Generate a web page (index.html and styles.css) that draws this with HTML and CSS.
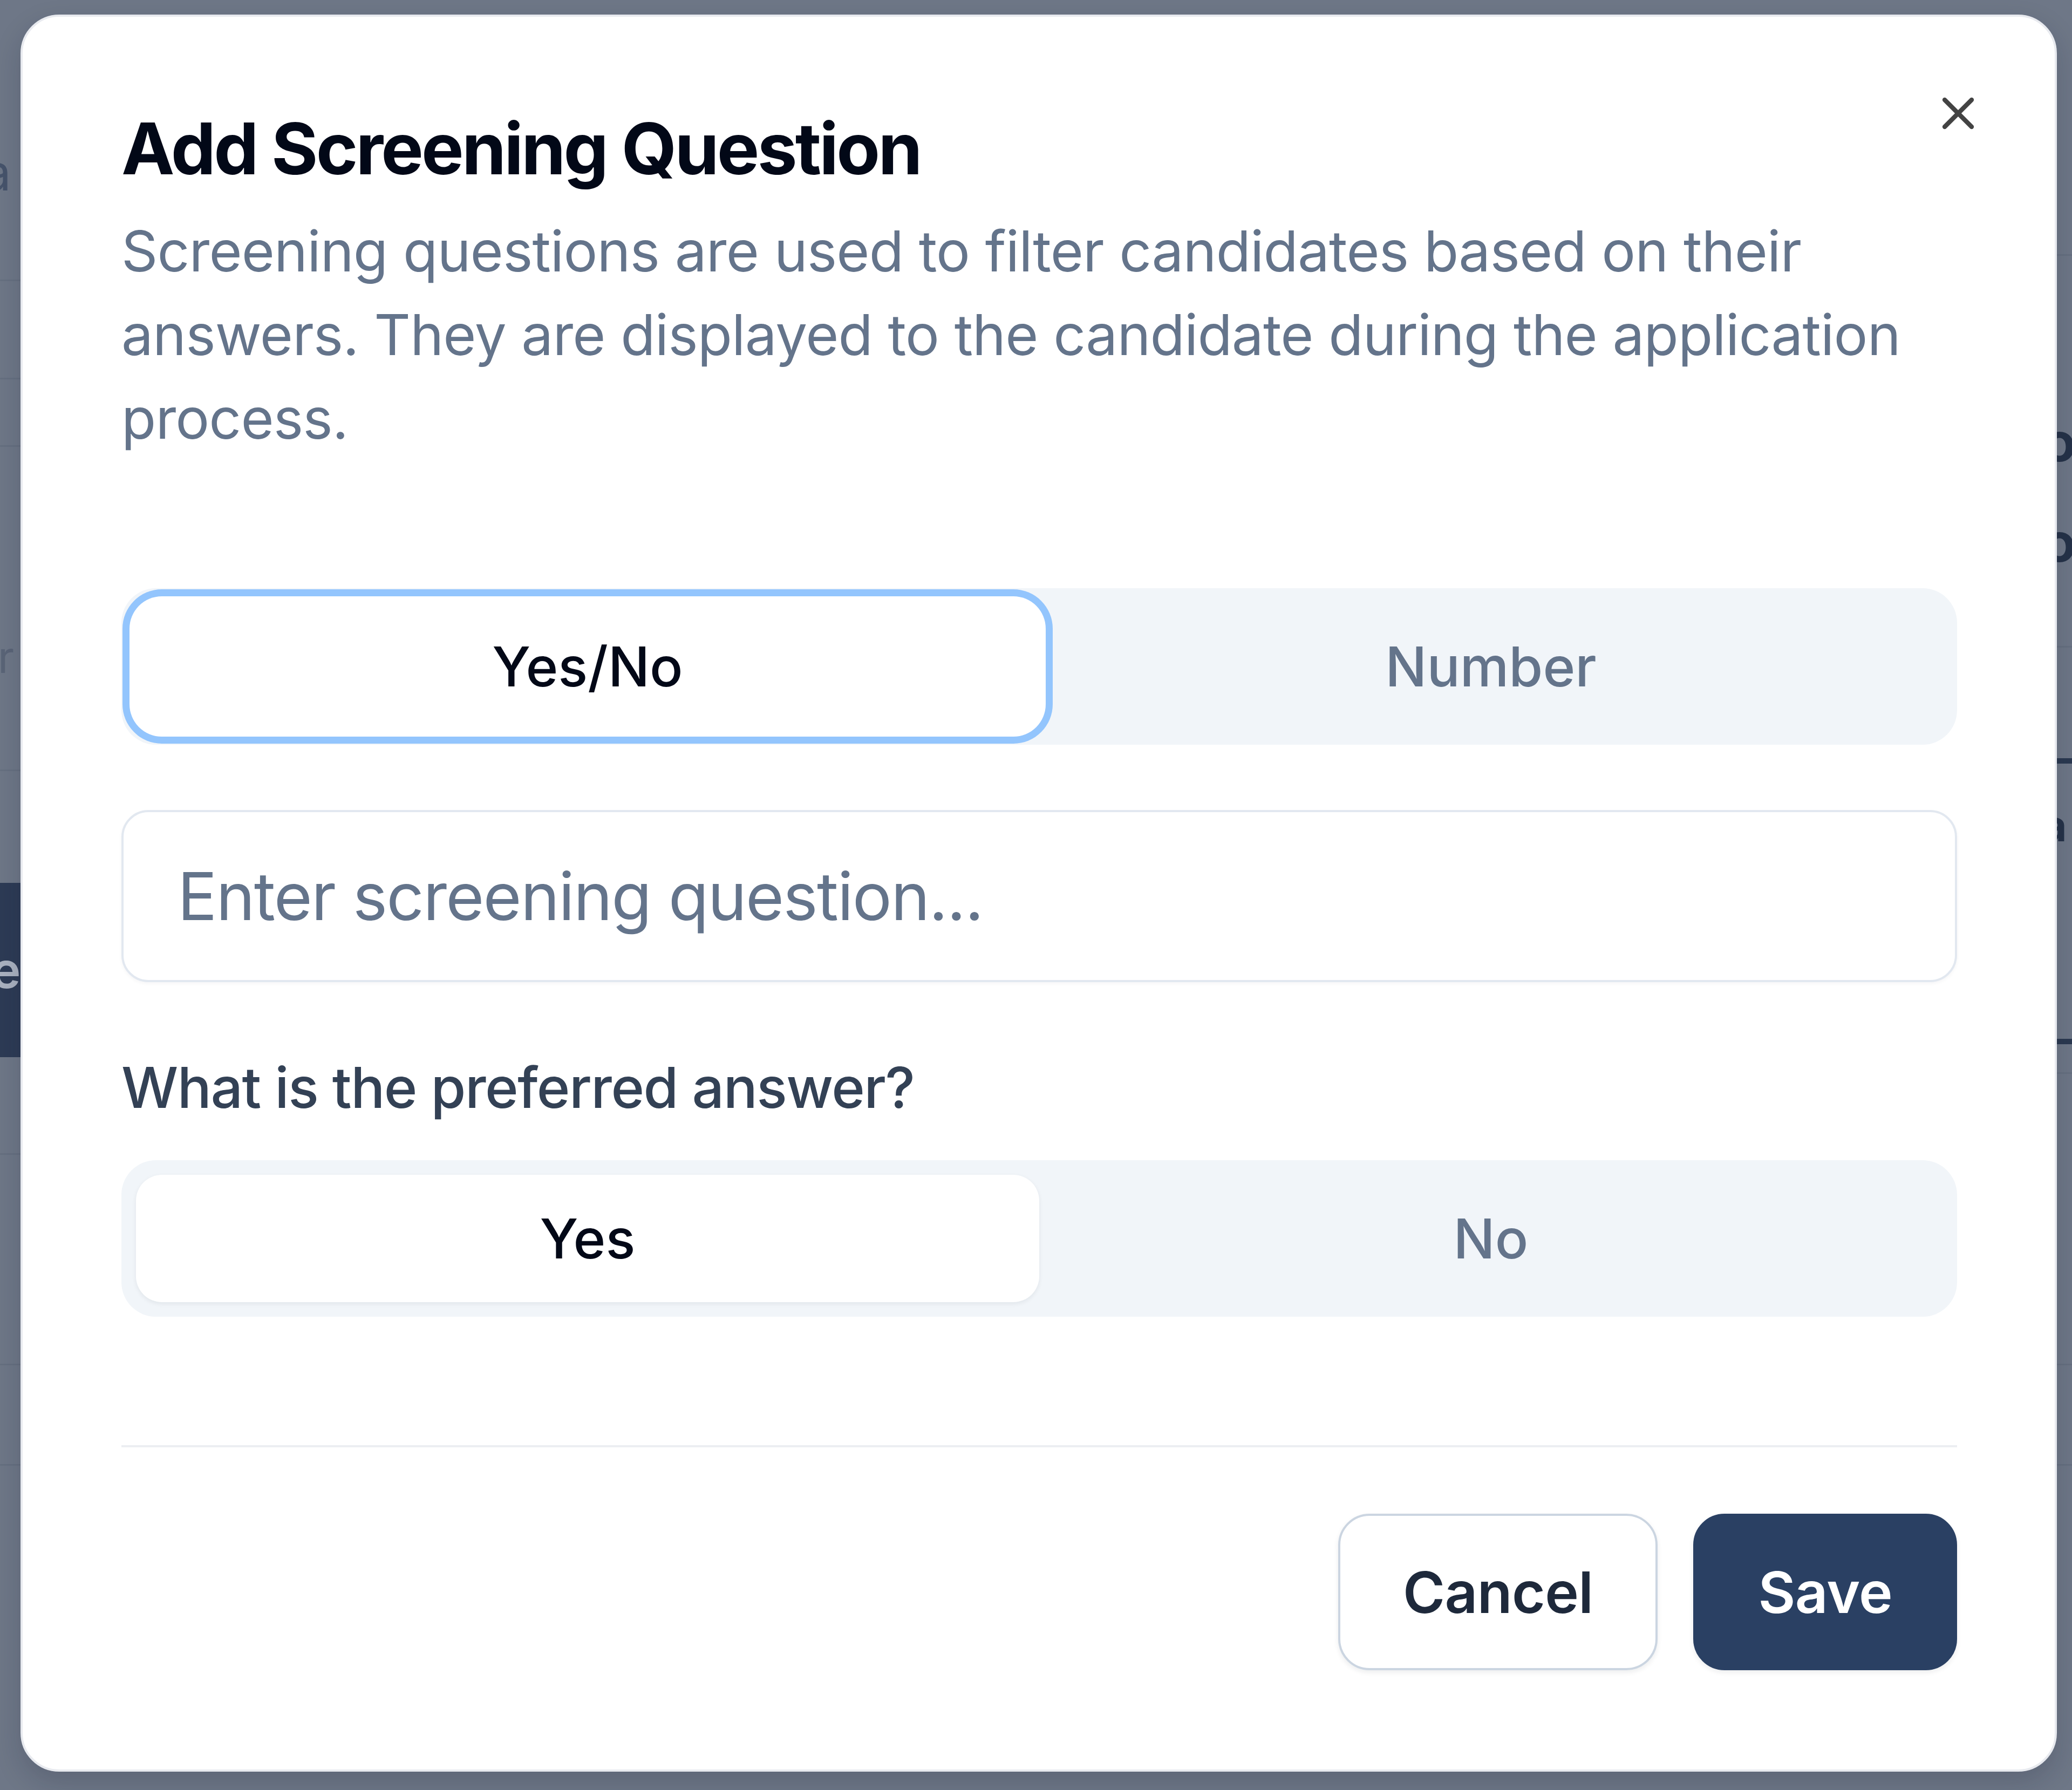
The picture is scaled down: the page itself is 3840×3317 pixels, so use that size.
FILE: index.html
```html
<!DOCTYPE html>
<html lang="en">
<head>
<meta charset="utf-8">
<title>Add Screening Question</title>
<link rel="stylesheet" href="styles.css">
</head>
<body>
<div class="under">
  <div class="strip strip-left">
    <div class="cell l1"><span class="tail tail-a">a</span></div>
    <div class="cell l2"></div>
    <div class="cell l3"></div>
    <div class="cell l4"><span class="tail tail-r">r</span></div>
    <div class="cell l5 noline"></div>
    <div class="cell l6 navy"><span class="tail tail-e">e</span></div>
    <div class="cell l7"></div>
    <div class="cell l8"></div>
    <div class="cell l9"></div>
    <div class="cell l10 noline"></div>
  </div>
  <div class="strip strip-right">
    <div class="cell r1"></div>
    <div class="cell r2"><span class="head">o<br>o</span></div>
    <div class="cell r3 noline"></div>
    <div class="cell r4 boxed"><span class="head head-a">a</span></div>
    <div class="cell r5"></div>
    <div class="cell r6"></div>
    <div class="cell r7"></div>
    <div class="cell r8 noline"></div>
  </div>
</div>

<div class="modal" role="dialog" aria-labelledby="dlg-title">
  <button class="close" aria-label="Close">
    <svg viewBox="0 0 24 24" width="100" height="100" fill="none" stroke="currentColor" stroke-width="2" stroke-linecap="round" stroke-linejoin="round"><path d="M18 6 6 18"/><path d="m6 6 12 12"/></svg>
  </button>
  <h2 class="title" id="dlg-title">Add Screening Question</h2>
  <p class="desc">Screening questions are used to filter candidates based on their answers. They are displayed to the candidate during the application process.</p>

  <div class="toggle toggle-type">
    <div class="item active ring">Yes/No</div>
    <div class="item">Number</div>
  </div>

  <input class="field" type="text" placeholder="Enter screening question...">

  <label class="label">What is the preferred answer?</label>

  <div class="toggle toggle-answer">
    <div class="item active">Yes</div>
    <div class="item">No</div>
  </div>

  <div class="divider"></div>

  <div class="footer">
    <button class="btn btn-outline">Cancel</button>
    <button class="btn btn-primary">Save</button>
  </div>
</div>
</body>
</html>
```

FILE: styles.css
```css
* { box-sizing: border-box; margin: 0; padding: 0; }
html, body { width: 3840px; height: 3317px; overflow: hidden; }
body {
  background: #6e7787;
  font-family: Inter, "Noto Sans", "Liberation Sans", sans-serif;
  position: relative;
}

/* dimmed page behind the overlay */
.under { display: flex; justify-content: space-between; height: 3317px; }
.strip { display: flex; flex-direction: column; overflow: hidden; }
.strip-left { width: 40px; }
.strip-right { width: 32px; }
.cell { flex: none; border-bottom: 3px solid #667080; overflow: hidden; white-space: nowrap; position: relative; }
.cell.noline { border-bottom: none; }
.l1 { height: 521px; }
.l2 { height: 182px; }
.l3 { height: 125px; }
.l4 { height: 601px; }
.l5 { height: 207px; }
.l6 { height: 323px; }
.l7 { height: 181px; }
.l8 { height: 390px; }
.l9 { height: 186px; }
.l10 { height: 601px; }
.navy { background: #2d3b55; border-bottom: none; display: flex; align-items: center; }
.tail { display: block; font-size: 92px; line-height: 120px; color: #46536b; }
.tail-a { padding-top: 260px; margin-left: -31px; }
.tail-r { padding-top: 330px; margin-left: -4px; font-size: 80px; color: #5a6477; }
.tail-e { color: #aab2c0; margin-left: -16px; font-weight: 600; }

.r1 { height: 474px; }
.r2 { height: 726px; }
.r3 { height: 205px; }
.r4 { height: 530px; border-top: 10px solid #2b3950; border-bottom: 10px solid #2b3950; }
.r5 { height: 55px; }
.r6 { height: 540px; }
.r7 { height: 186px; }
.r8 { height: 601px; }
.head { display: block; font-size: 100px; line-height: 186px; font-weight: 700; color: #253248; padding-top: 252px; margin-left: -22px; }
.head-a { padding-top: 55px; line-height: 120px; font-size: 80px; margin-left: -24px; }

/* dialog */
.modal {
  position: absolute;
  left: 38px;
  top: 27px;
  width: 3774px;
  background: #ffffff;
  border: 4px solid #e8eaef;
  border-radius: 72px;
  padding: 165px 181px 184px 183px;
  display: flex;
  flex-direction: column;
  box-shadow: 0 20px 50px rgba(15, 23, 42, 0.18);
}
.close {
  position: absolute;
  top: 129px;
  right: 129px;
  width: 100px;
  height: 100px;
  border: none;
  background: none;
  color: #434343;
  display: block;
}
.close svg { display: block; }

.title {
  font-size: 132px;
  line-height: 158px;
  font-weight: 700;
  color: #020817;
  letter-spacing: -3.8px;
}
.desc {
  margin-top: 33px;
  font-size: 105px;
  line-height: 155px;
  color: #64748b;
  font-weight: 400;
  letter-spacing: -0.9px;
}

.toggle {
  height: 290px;
  background: #f1f5f9;
  border-radius: 64px;
  padding: 27px;
  display: grid;
  grid-template-columns: 1fr 1fr;
}
.toggle-type { margin-top: 238px; }
.toggle-answer { margin-top: 58px; }
.item {
  display: flex;
  align-items: center;
  justify-content: center;
  font-size: 102px;
  font-weight: 500;
  color: #64748b;
  border-radius: 48px;
}
.item.active {
  background: #ffffff;
  color: #020817;
  box-shadow: 0 3px 8px rgba(15, 23, 42, 0.07);
}
.item.ring {
  box-shadow: 0 0 0 12px #ffffff, 0 0 0 25px #93c5fd;
}

.field {
  margin-top: 121px;
  height: 319px;
  width: 100%;
  border: 4px solid #e2e8f0;
  border-radius: 50px;
  padding: 0 100px;
  font-family: Inter, "Noto Sans", "Liberation Sans", sans-serif;
  font-size: 122px;
  letter-spacing: -1.8px;
  color: #020817;
  background: #fff;
  box-shadow: 0 3px 6px rgba(15, 23, 42, 0.04);
  outline: none;
}
.field::placeholder { color: #64748b; }

.label {
  margin-top: 117px;
  font-size: 105px;
  line-height: 155px;
  font-weight: 500;
  letter-spacing: -1.5px;
  color: #334155;
}

.divider { margin-top: 238px; height: 4px; background: #eceef2; }

.footer {
  margin-top: 123px;
  display: flex;
  justify-content: flex-end;
  gap: 66px;
}
.btn {
  height: 290px;
  padding: 0 116px;
  border-radius: 58px;
  font-family: Inter, "Noto Sans", "Liberation Sans", sans-serif;
  font-size: 106px;
  font-weight: 600;
  letter-spacing: -0.6px;
  box-shadow: 0 4px 10px rgba(15, 23, 42, 0.08);
}
.btn-outline {
  background: #fff;
  border: 4px solid #cbd5e1;
  color: #1e293b;
}
.btn-primary {
  background: #2a4063;
  border: 4px solid #2a4063;
  color: #fff;
}
```
